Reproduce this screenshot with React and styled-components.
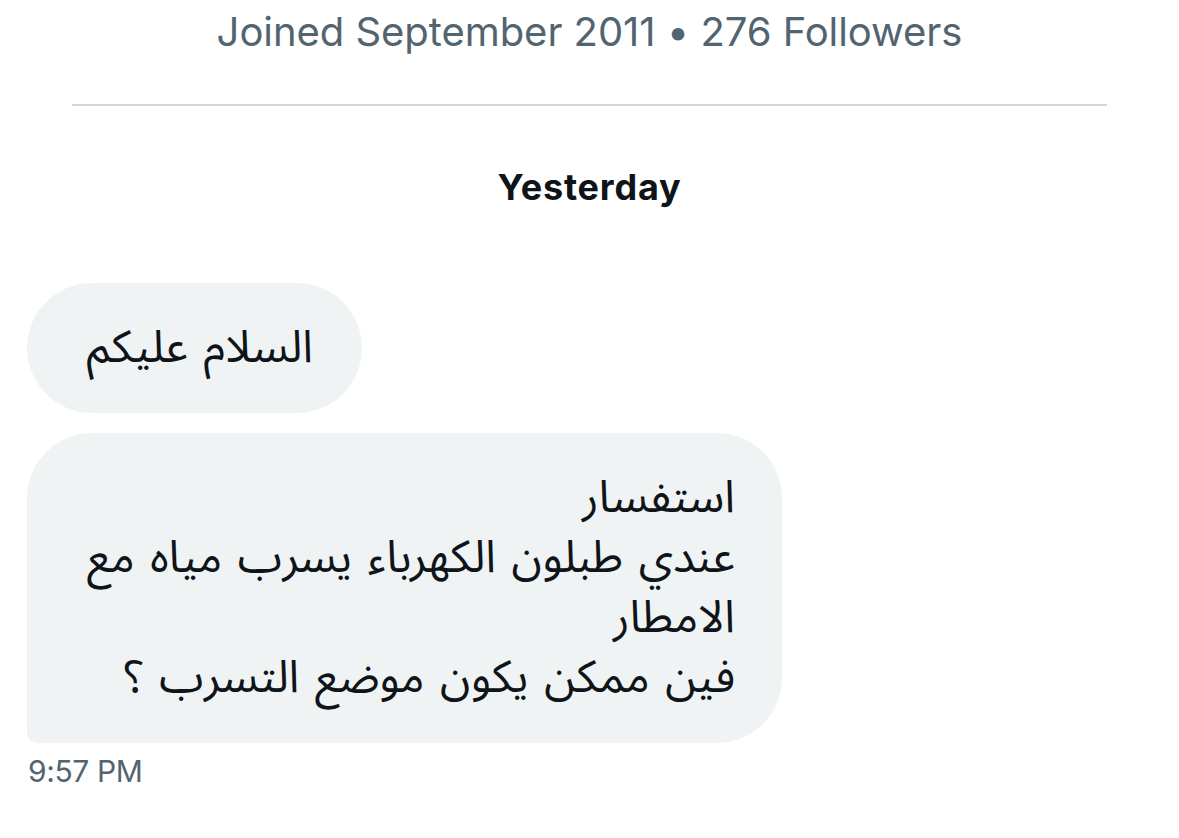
import React from "react"
import styled, { createGlobalStyle } from "styled-components"

const GlobalStyle = createGlobalStyle`
  body {
    margin: 0;
    background: #ffffff;
    font-family: Inter, "Liberation Sans", sans-serif;
  }
`

const Page = styled.div`
  width: 1179px;
  height: 838px;
  overflow: hidden;
  display: flex;
  flex-direction: column;
`

const ProfileMeta = styled.div`
  text-align: center;
  color: #536471;
  font-size: 40px;
  line-height: 46px;
  padding-top: 9px;
  letter-spacing: -0.05px;
`

const Divider = styled.hr`
  border: none;
  height: 2px;
  background: #d3d6da;
  margin: 49px 72px 0 72px;
`

const DayLabel = styled.div`
  text-align: center;
  color: #0f1419;
  font-weight: 700;
  font-size: 36px;
  line-height: 40px;
  margin-top: 61px;
  letter-spacing: 0.8px;
`

const Thread = styled.div`
  display: flex;
  flex-direction: column;
  align-items: flex-start;
  gap: 20px;
  padding: 0 27px;
  margin-top: 76px;
`

const Bubble = styled.div`
  background: #eff3f4;
  color: #0f1419;
  direction: rtl;
  text-align: right;
  font-family: "Noto Sans Arabic", "DejaVu Sans", sans-serif;
  font-size: 45px;
  line-height: 60px;
  word-spacing: 4px;
  border-radius: ${p => (p.$tail ? "65px 65px 65px 10px" : "65px")};
  width: ${p => p.$width}px;
  height: ${p => p.$height}px;
  box-sizing: border-box;
  padding: ${p => p.$padding};
  display: flex;
  flex-direction: column;
  justify-content: center;
`

const Line = styled.span`
  display: block;
  white-space: nowrap;
`

const Time = styled.div`
  color: #536471;
  font-size: 30px;
  line-height: 32px;
  margin: 12px 0 0 28px;
  letter-spacing: -0.4px;
`

const messageLines = [
  "استفسار",
  "عندي طبلون الكهرباء يسرب مياه مع",
  "الامطار",
  "فين ممكن يكون موضع التسرب ؟",
]

export default function App() {
  return (
    <>
      <GlobalStyle />
      <Page>
        <ProfileMeta>Joined September 2011 • 276 Followers</ProfileMeta>
        <Divider />
        <DayLabel>Yesterday</DayLabel>
        <Thread>
          <Bubble $width={335} $height={130} $padding="0 49px 0 20px">
            <Line>السلام عليكم</Line>
          </Bubble>
          <Bubble $tail $width={755} $height={310} $padding="0 47px 0 20px">
            {messageLines.map(l => (
              <Line key={l}>{l}</Line>
            ))}
          </Bubble>
        </Thread>
        <Time>9:57 PM</Time>
      </Page>
    </>
  )
}
